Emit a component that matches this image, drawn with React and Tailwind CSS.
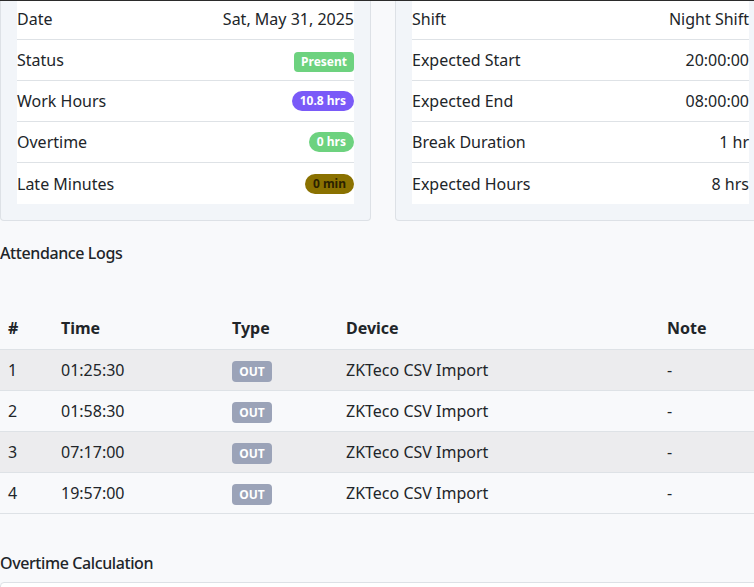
import React from 'react';

const dayRows = [
    { label: 'Date', value: 'Sat, May 31, 2025' },
    { label: 'Status', badge: 'Present', cls: 'mt-[4px] bg-[#6dd27f] text-white rounded-[4px] px-[7px]' },
    { label: 'Work Hours', badge: '10.8 hrs', cls: 'bg-[#7a5af8] text-white rounded-full px-[8px]' },
    { label: 'Overtime', badge: '0 hrs', cls: 'bg-[#6dd27f] text-white rounded-full px-[8px]' },
    { label: 'Late Minutes', badge: '0 min', cls: 'bg-[#8a7100] text-[#2a2200] rounded-full px-[8px]' },
];

const shiftRows = [
    { label: 'Shift', value: 'Night Shift' },
    { label: 'Expected Start', value: '20:00:00' },
    { label: 'Expected End', value: '08:00:00' },
    { label: 'Break Duration', value: '1 hr' },
    { label: 'Expected Hours', value: '8 hrs' },
];

const logs = [
    { n: 1, time: '01:25:30' },
    { n: 2, time: '01:58:30' },
    { n: 3, time: '07:17:00' },
    { n: 4, time: '19:57:00' },
];

function InfoCard({ rows }) {
    return (
        <div className="w-[371px] bg-[#f2f5f9] border-x border-b border-[#dde1e6] rounded-b-[4px] px-4 pb-4">
            <div className="bg-white">
                {rows.map((r, i) => (
                    <div
                        key={r.label}
                        className={`flex items-center justify-between ${i === 0 ? 'h-[39px] pb-[2px]' : 'h-[41px]'} ${i < rows.length - 1 ? 'border-b border-[#dee2e6]' : ''}`}
                    >
                        <span>{r.label}</span>
                        {r.badge ? (
                            <span className={`text-[12px] font-bold leading-[20px] h-[20px] ${r.cls}`}>{r.badge}</span>
                        ) : (
                            <span>{r.value}</span>
                        )}
                    </div>
                ))}
            </div>
        </div>
    );
}

export default function App() {
    return (
        <div className="w-[754px] h-[587px] overflow-hidden bg-[#f8f9fb] text-[#212529] text-[16px] font-['Noto_Sans',sans-serif]">
            <div className="w-[767px] border-t border-[#2b2b2b]">
                <div className="flex gap-[24px]">
                    <InfoCard rows={dayRows} />
                    <InfoCard rows={shiftRows} />
                </div>

                <h2 className="mt-[22px] text-[16px] tracking-[-0.4px] font-medium leading-[20px]">Attendance Logs</h2>

                <table className="mt-[45px] w-full table-fixed border-collapse text-left">
                    <thead>
                        <tr className="h-[41px] border-b border-[#dee2e6]">
                            <th className="w-[61px] pl-2 font-bold">#</th>
                            <th className="w-[171px] font-bold">Time</th>
                            <th className="w-[114px] font-bold">Type</th>
                            <th className="w-[321px] font-bold">Device</th>
                            <th className="font-bold">Note</th>
                        </tr>
                    </thead>
                    <tbody>
                        {logs.map((l, i) => (
                            <tr key={l.n} className={`h-[41px] border-b border-[#dee2e6] ${i % 2 === 0 ? 'bg-[#ececee]' : ''}`}>
                                <td className="pl-2">{l.n}</td>
                                <td>{l.time}</td>
                                <td>
                                    <span className="inline-block align-middle bg-[#9ba3b8] text-white text-[12px] font-bold rounded-[4px] w-[40px] h-[21px] leading-[21px] text-center">OUT</span>
                                </td>
                                <td>ZKTeco CSV Import</td>
                                <td>-</td>
                            </tr>
                        ))}
                    </tbody>
                </table>

                <h2 className="mt-[39px] text-[16px] tracking-[-0.4px] font-medium leading-[20px]">Overtime Calculation</h2>
                <div className="mt-[9px] h-[40px] bg-white border border-[#dde1e6] rounded-t-[4px]" />
            </div>
        </div>
    );
}
